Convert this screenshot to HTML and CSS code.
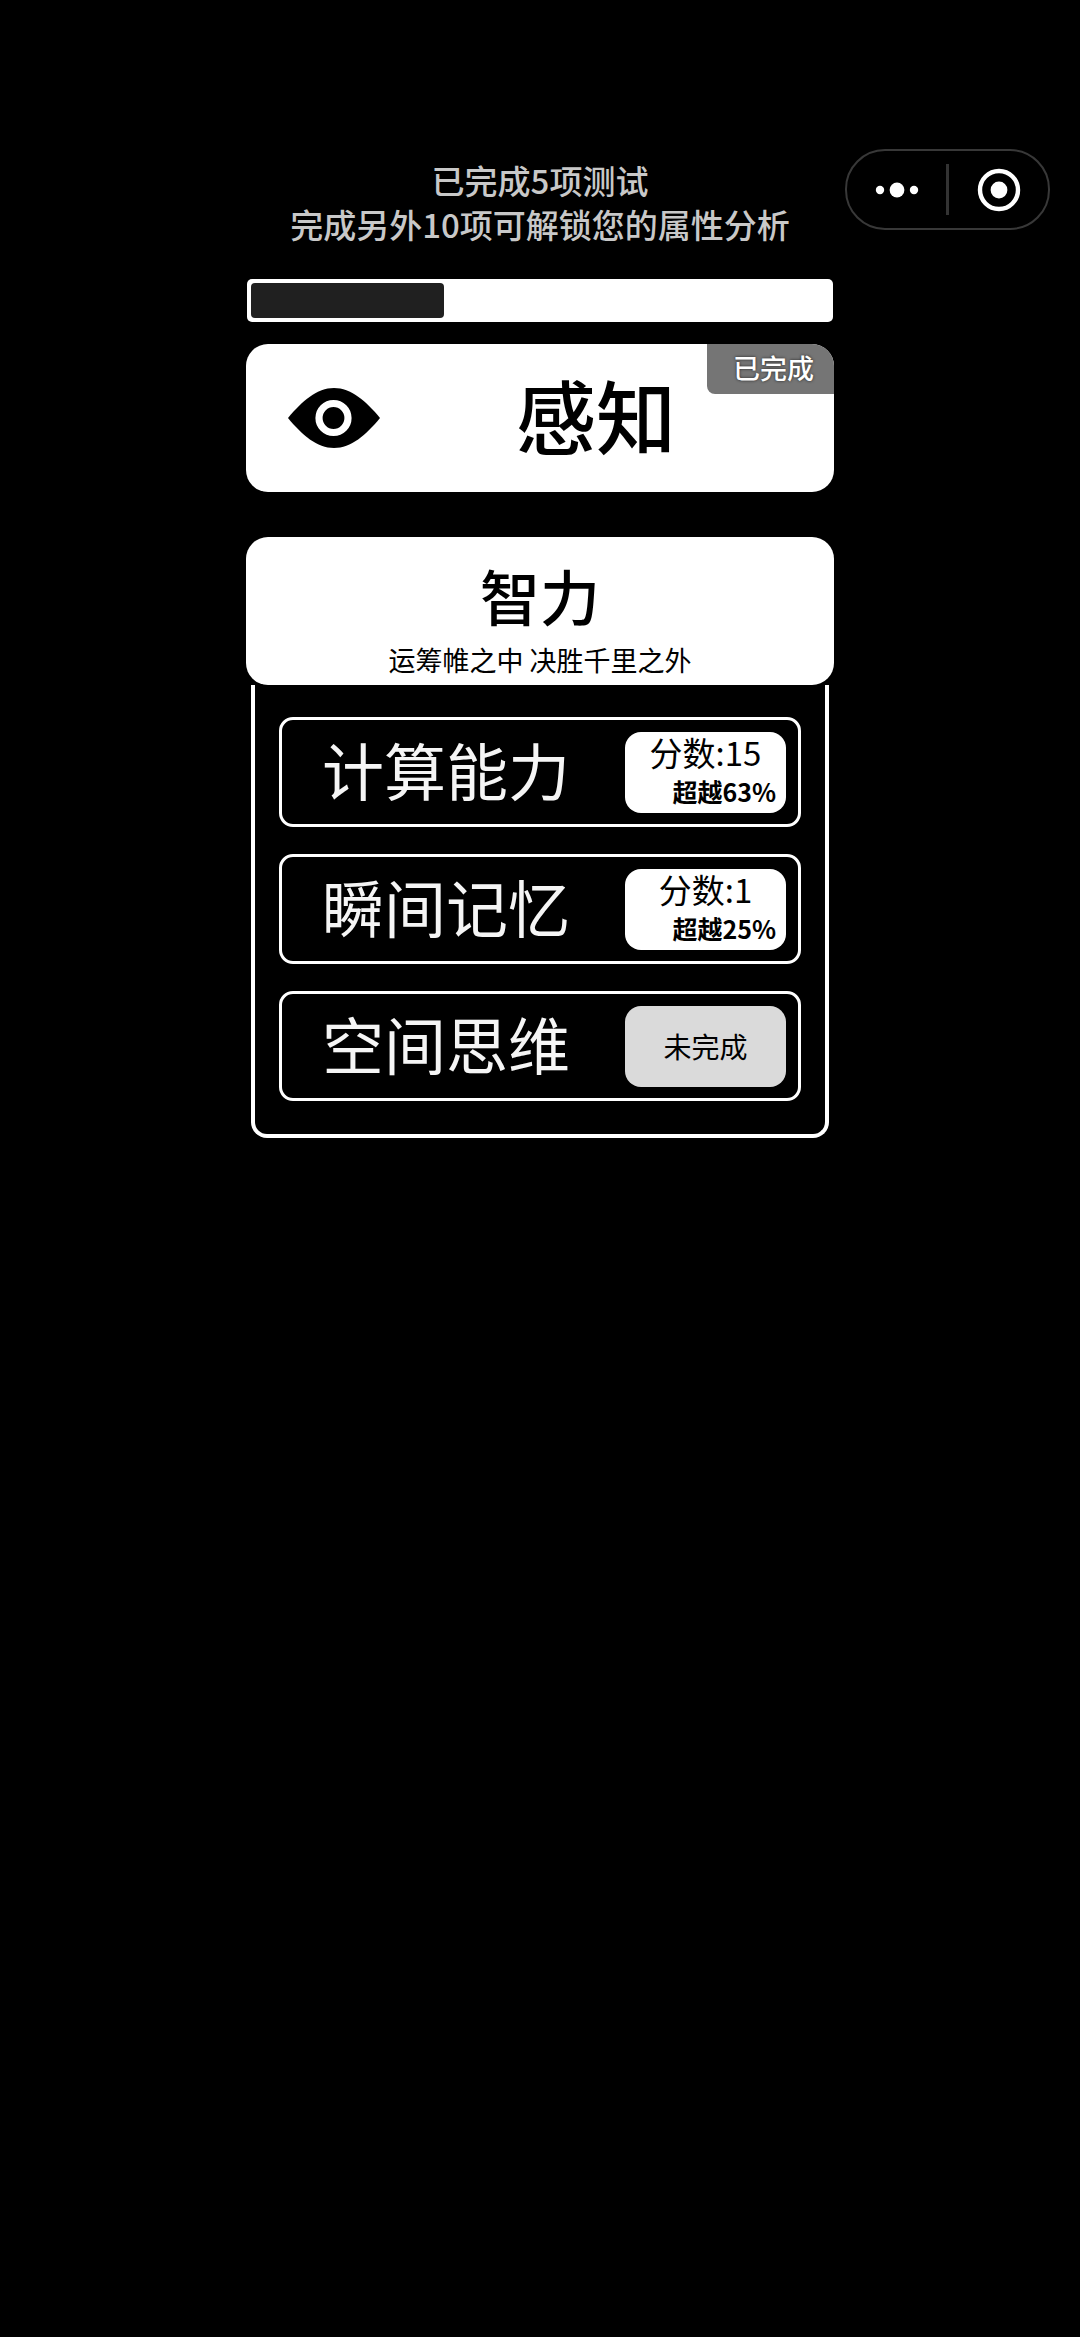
FILE: index.html
```html
<!DOCTYPE html>
<html lang="zh-CN">
<head>
  <meta charset="utf-8">
  <meta name="viewport" content="width=device-width, initial-scale=1">
  <title>属性测试</title>
  <link rel="stylesheet" href="styles.css">
</head>
<body>
  <div class="capsule">
    <button class="capsule-button" type="button" aria-label="更多">
      <svg width="44" height="44" viewBox="0 0 44 44" fill="#fff" aria-hidden="true">
        <circle cx="5" cy="22" r="4.2"/><circle cx="22" cy="22" r="7.4"/><circle cx="39" cy="22" r="4.2"/>
      </svg>
    </button>
    <span class="capsule-divider"></span>
    <button class="capsule-button" type="button" aria-label="关闭">
      <svg width="44" height="44" viewBox="0 0 44 44" aria-hidden="true">
        <circle cx="22" cy="22" r="19" fill="none" stroke="#fff" stroke-width="4.4"/><circle cx="22" cy="22" r="8.4" fill="#fff"/>
      </svg>
    </button>
  </div>

  <main class="page">
    <header class="summary">
      <p>已完成5项测试</p>
      <p>完成另外10项可解锁您的属性分析</p>
    </header>

    <div class="progress" role="progressbar" aria-label="测试进度" aria-valuemin="0" aria-valuemax="15" aria-valuenow="5">
      <div class="progress-fill" style="width: 33.33%"></div>
    </div>

    <button class="card card-sense" type="button">
      <svg class="eye" width="92" height="60" viewBox="0 0 92 60" aria-hidden="true">
        <path d="M0 30C14 13 29 0 46 0S78 13 92 30C78 47 63 60 46 60S14 47 0 30Z"/>
        <circle cx="45.5" cy="30" r="14.5" fill="none" stroke="#fff" stroke-width="7.2"/>
      </svg>
      <span class="sense-title">感知</span>
      <span class="badge">已完成</span>
    </button>

    <section class="group">
      <button class="card card-mind" type="button">
        <span class="mind-title">智力</span>
        <span class="mind-motto">运筹帷之中 决胜千里之外</span>
      </button>
      <div class="tests">
        <button class="test" type="button">
          <span class="test-name">计算能力</span>
          <span class="result">
            <span class="score">分数:15</span>
            <span class="rank">超越63%</span>
          </span>
        </button>
        <button class="test" type="button">
          <span class="test-name">瞬间记忆</span>
          <span class="result">
            <span class="score">分数:1</span>
            <span class="rank">超越25%</span>
          </span>
        </button>
        <button class="test" type="button">
          <span class="test-name">空间思维</span>
          <span class="result result-pending">未完成</span>
        </button>
      </div>
    </section>
  </main>
</body>
</html>
```
FILE: styles.css
```css
* {
  box-sizing: border-box;
}

body {
  margin: 0;
  min-height: 100vh;
  background: #000;
  color: #000;
  font-family: "Noto Sans CJK SC", sans-serif;
}

button {
  margin: 0;
  padding: 0;
  border: 0;
  background: none;
  color: inherit;
  font: inherit;
  cursor: pointer;
}

/* Floating host-app menu */
.capsule {
  position: absolute;
  top: 149px;
  right: 30px;
  display: flex;
  align-items: center;
  width: 205px;
  height: 81px;
  border: 2px solid #383838;
  border-radius: 40px;
}

.capsule-button {
  display: flex;
  flex: 1;
  align-items: center;
  justify-content: center;
}

.capsule-divider {
  width: 3px;
  height: 51px;
  background: #333;
}

.page {
  width: 100%;
  max-width: 588px;
  margin: 0 auto;
  padding: 158px 0 40px;
}

.summary {
  color: #c8c8c8;
  font-size: 33px;
  font-weight: 500;
  line-height: 44px;
  text-align: center;
}

.summary p {
  margin: 0;
}

.progress {
  height: 43px;
  margin: 33px 1px 22px;
  padding: 4px;
  border-radius: 5px;
  background: #fff;
}

.progress-fill {
  height: 100%;
  border-radius: 4px;
  background: #202020;
}

.card {
  width: 100%;
  height: 148px;
  border-radius: 22px;
  background: #fff;
}

.card-sense {
  position: relative;
  display: flex;
  align-items: center;
  padding-left: 42px;
  overflow: hidden;
}

.sense-title {
  flex: 1;
  padding: 0 22px 10px 0;
  font-size: 80px;
  font-weight: 500;
  line-height: 138px;
}

.badge {
  position: absolute;
  top: 0;
  right: 0;
  padding: 0 20px 2px 26px;
  border-bottom-left-radius: 8px;
  background: #757575;
  color: #fff;
  font-size: 27px;
  font-weight: 500;
  line-height: 48px;
  text-shadow: 0 0 3px #222;
}

.group {
  margin-top: 45px;
}

.card-mind {
  display: flex;
  flex-direction: column;
  align-items: center;
  padding-top: 16px;
}

.mind-title {
  font-size: 60px;
  font-weight: 500;
  line-height: 84px;
}

.mind-motto {
  font-size: 27px;
  line-height: 46px;
}

.tests {
  display: flex;
  flex-direction: column;
  gap: 27px;
  margin: 0 5px;
  padding: 32px 24px 33px;
  border: 4px solid #fff;
  border-top: 0;
  border-radius: 0 0 16px 16px;
}

.test {
  display: flex;
  align-items: center;
  justify-content: space-between;
  height: 110px;
  padding: 0 12px 0 40px;
  border: 3px solid #fff;
  border-radius: 14px;
  color: #f5f5f5;
}

.test-name {
  padding-bottom: 6px;
  font-size: 62px;
  line-height: 90px;
}

.result {
  display: flex;
  flex-direction: column;
  width: 161px;
  height: 81px;
  border-radius: 16px;
  background: #fff;
  color: #000;
}

.score {
  font-size: 33px;
  line-height: 40px;
}

.rank {
  padding-right: 10px;
  font-size: 25px;
  font-weight: 700;
  line-height: 38px;
  text-align: right;
}

.result-pending {
  justify-content: center;
  background: #dadada;
  font-size: 28px;
}
```
